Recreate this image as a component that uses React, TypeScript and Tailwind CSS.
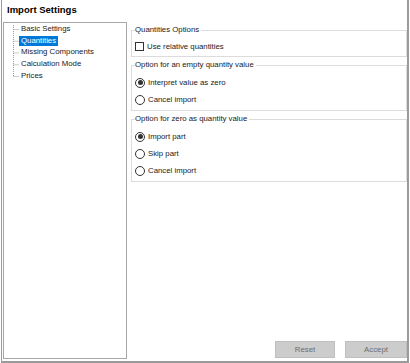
import React, { useState } from "react";

const treeItems = [
  "Basic Settings",
  "Quantities",
  "Missing Components",
  "Calculation Mode",
  "Prices",
];

const ROW = 11.75;

const Radio = ({ checked, label }: { checked?: boolean; label: string }) => (
  <label className="flex items-center h-[17px] gap-[3px]">
    <span className="w-[10px] h-[10px] rounded-full border border-[#333] bg-white flex items-center justify-center">
      {checked && <span className="w-[5px] h-[5px] rounded-full bg-[#333]" />}
    </span>
    <span>{label}</span>
  </label>
);

const Group = ({
  title,
  children,
}: {
  title: string;
  children: React.ReactNode;
}) => (
  <fieldset className="border border-[#dcdcdc] px-[3px] pt-[4px] pb-[2px]">
    <legend className="pr-[2px] leading-[10px]">{title}</legend>
    {children}
  </fieldset>
);

const App = () => {
  const [selected, setSelected] = useState(1);

  return (
    <div className="w-[410px] h-[363px] bg-white text-[#1a1a1a] text-[7.8px] font-['Liberation_Sans',Arial,sans-serif]">
      <div className="ml-px w-[408px] h-[363px] border-l border-r-2 border-b-2 border-[#9a9a9a] flex flex-col">
        <div className="h-[22px] pl-[5px] pb-[2px] flex items-center font-bold text-[9.5px] text-black">
          Import Settings
        </div>
        <div className="flex flex-1 pb-[2px]">
          <div className="ml-px w-[124px] border border-[#a7a7a7]">
            <div className="relative">
              <svg
                className="absolute left-0 top-0"
                width="20"
                height="70"
                stroke="#9a9a9a"
                strokeDasharray="1 1"
              >
                <line x1="9.5" y1="2" x2="9.5" y2={6 + 4 * ROW} />
                {treeItems.map((_, i) => (
                  <line
                    key={i}
                    x1="9.5"
                    y1={6.5 + i * ROW}
                    x2="15"
                    y2={6.5 + i * ROW}
                  />
                ))}
              </svg>
              {treeItems.map((item, i) => (
                <div key={item} className="h-[11.75px] flex items-center pl-[15px]">
                  <span
                    onClick={() => setSelected(i)}
                    className={
                      selected === i
                        ? "px-[2px] h-[10px] leading-[10px] bg-[#0078d7] text-white"
                        : "px-[2px] h-[10px] leading-[10px]"
                    }
                  >
                    {item}
                  </span>
                </div>
              ))}
            </div>
          </div>
          <div className="ml-[4px] w-[276px] pt-[3px] flex flex-col gap-[3px]">
            <Group title="Quantities Options">
              <label className="flex items-center h-[15px] gap-[3px]">
                <span className="w-[9px] h-[9px] border border-[#333] bg-white" />
                <span>Use relative quantities</span>
              </label>
            </Group>
            <Group title="Option for an empty quantity value">
              <Radio checked label="Interpret value as zero" />
              <Radio label="Cancel import" />
            </Group>
            <Group title="Option for zero as quantity value">
              <Radio checked label="Import part" />
              <Radio label="Skip part" />
              <Radio label="Cancel import" />
            </Group>
            <div className="mt-auto mb-px flex justify-end gap-[10px]">
              <button
                disabled
                className="w-[60px] h-[17px] bg-[#cccccc] border border-[#bfbfbf] text-[#6d6d6d]"
              >
                Reset
              </button>
              <button
                disabled
                className="w-[62px] h-[17px] bg-[#cccccc] border border-[#bfbfbf] text-[#6d6d6d]"
              >
                Accept
              </button>
            </div>
          </div>
        </div>
      </div>
    </div>
  );
};

export default App;
